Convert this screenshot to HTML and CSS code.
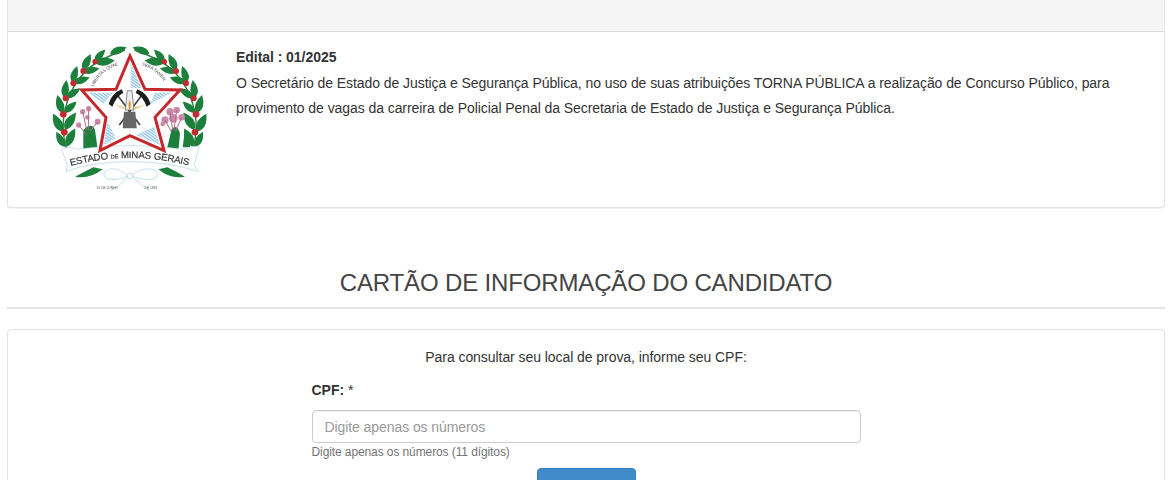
FILE: index.html
```html
<!DOCTYPE html>
<html lang="pt-BR">
<head>
<meta charset="utf-8">
<title>Cartão de Informação do Candidato</title>
<link rel="stylesheet" href="styles.css">
</head>
<body>
<main class="page">
  <section class="panel panel-edital">
    <div class="panel-heading"></div>
    <div class="media">
      <svg class="emblem" viewBox="0 0 600 525" role="img" aria-label="Brasão do Estado de Minas Gerais">
        <defs>
          <path id="leaf" d="M0 0Q35-46 100 0Q40 36 0 0Z"/>
          <pattern id="hatch" width="7" height="7" patternUnits="userSpaceOnUse" patternTransform="rotate(35)">
            <rect width="7" height="4" fill="#8fc3e6"/>
          </pattern>
          <g id="branch">
            <path d="M112 365C85 290 100 190 170 120C205 90 240 75 285 60" fill="none" stroke="#2e7a3a" stroke-width="4"/>
            <g fill="#1d7f3c">
              <use href="#leaf" transform="translate(240 72) rotate(-22) scale(.54)"/>
              <use href="#leaf" transform="translate(195 95) rotate(-50) scale(.48)"/>
              <use href="#leaf" transform="translate(195 100) rotate(-8) scale(.6)"/>
              <use href="#leaf" transform="translate(160 122) rotate(-66) scale(.55)"/>
              <use href="#leaf" transform="translate(160 128) rotate(-15) scale(.5)"/>
              <use href="#leaf" transform="translate(128 158) rotate(-75) scale(.52)"/>
              <use href="#leaf" transform="translate(130 160) rotate(-20) scale(.52)"/>
              <use href="#leaf" transform="translate(105 205) rotate(-85) scale(.55)"/>
              <use href="#leaf" transform="translate(108 205) rotate(-35) scale(.52)"/>
              <use href="#leaf" transform="translate(100 250) rotate(-108) scale(.58)"/>
              <use href="#leaf" transform="translate(104 250) rotate(-44) scale(.5)"/>
              <use href="#leaf" transform="translate(100 305) rotate(-120) scale(.62)"/>
              <use href="#leaf" transform="translate(105 300) rotate(-58) scale(.62)"/>
              <use href="#leaf" transform="translate(105 350) rotate(-120) scale(.52)"/>
              <use href="#leaf" transform="translate(110 350) rotate(-65) scale(.6)"/>
            </g>
            <g fill="#c52a30">
              <circle cx="195" cy="95" r="8"/><circle cx="160" cy="123" r="9"/><circle cx="130" cy="160" r="9"/>
              <circle cx="107" cy="205" r="9"/><circle cx="100" cy="253" r="10"/><circle cx="103" cy="307" r="10"/>
            </g>
          </g>
        </defs>
        <use href="#branch"/>
        <use href="#branch" transform="translate(598 0) scale(-1 1)"/>
        <g fill="#1d7f3c">
          <path d="M160 300Q185 275 195 300L205 372L160 365Z"/>
          <path d="M135 440Q180 448 218 418L190 412Q165 425 135 440Z"/>
          <path d="M465 440Q420 448 385 418L412 412Q440 425 465 440Z"/>
          <path d="M408 368L425 298Q440 280 450 310L445 365Z"/>
          <path d="M458 352L465 300Q482 325 480 352Z"/>
        </g>
        <g fill="#c98aa6">
          <circle cx="158" cy="245" r="8"/><circle cx="176" cy="236" r="8"/><circle cx="146" cy="285" r="8"/><circle cx="203" cy="275" r="9"/><circle cx="172" cy="262" r="7"/>
          <circle cx="420" cy="245" r="11"/><circle cx="440" cy="240" r="10"/><circle cx="405" cy="270" r="11"/><circle cx="430" cy="265" r="13"/><circle cx="455" cy="262" r="10"/><circle cx="398" cy="282" r="7"/>
        </g>
        <g stroke="#b5688c" stroke-width="3" fill="none">
          <path d="M158 245L170 300M176 236L175 300M146 285L170 315M203 275L180 305"/>
          <path d="M420 245L428 300M440 240L432 300M405 270L424 305M455 262L436 305"/>
        </g>
        <path d="M95 358Q118 346 140 358Q300 335 462 358Q485 346 508 350L492 405L505 425Q420 395 300 395Q180 395 108 425L112 405Z" fill="#fff" stroke="#a9d2e6" stroke-width="2"/>
        <path d="M300 78L345 178L450 180L375 262L402 362L300 317L210 362L228 262L155 180L258 178Z" fill="#fff" stroke="#c4282d" stroke-width="9" stroke-linejoin="miter"/>
        <g fill="url(#hatch)">
          <path d="M302 100L335 174L302 174Z"/>
          <path d="M178 188L248 188L220 222Z"/>
          <path d="M425 188L375 188L360 222Z"/>
          <path d="M232 275L222 345L258 325Z"/>
          <path d="M318 315L390 345L372 290Z"/>
        </g>
        <g stroke="#444" fill="none">
          <path d="M258 190L330 285" stroke-width="5"/>
          <path d="M340 190L268 285" stroke-width="5"/>
        </g>
        <g fill="#1d1d1d">
          <path d="M236 222Q245 190 275 178L280 188Q258 200 247 230Z"/>
          <path d="M362 222Q352 190 322 178L317 188Q340 200 350 230Z"/>
        </g>
        <path d="M255 222Q275 232 292 230L292 238Q272 240 255 222ZM345 222Q325 232 306 230L306 238Q326 240 345 222Z" fill="#e9d79a"/>
        <path d="M292 182H306L312 240H286Z" fill="#e9eef2" stroke="#555" stroke-width="2"/>
        <path d="M299 210Q306 225 299 240Q292 225 299 210Z" fill="#d9982b"/>
        <path d="M282 245H316L320 295H278Z" fill="#666"/>
        <path id="mottoL" d="M190 170Q215 120 262 106" fill="none"/>
        <path id="mottoR" d="M335 106Q385 120 412 170" fill="none"/>
        <path id="ribbonArc" d="M122 408Q300 360 480 408" fill="none"/>
        <text class="motto"><textPath href="#mottoL">LIBERTAS QUAE</textPath></text>
        <text class="motto"><textPath href="#mottoR">SERA TAMEN</textPath></text>
        <text class="ribbon"><textPath href="#ribbonArc" textLength="358">ESTADO <tspan class="ribbon-small">DE</tspan> MINAS GERAIS</textPath></text>
        <g fill="none" stroke="#bfe0ee" stroke-width="3">
          <path d="M295 438C260 405 220 415 222 435C225 455 265 450 295 438Z"/>
          <path d="M305 438C340 405 385 415 382 435C378 455 335 450 305 438Z"/>
          <path d="M290 442Q270 470 240 482M310 442Q335 470 360 482"/>
          <circle cx="300" cy="438" r="9"/>
        </g>
        <text class="date" x="232" y="477">15 DE JUNHO</text>
        <text class="date" x="363" y="477">DE 1891</text>
      </svg>
      <div class="media-body">
        <h2 class="edital-title">Edital : 01/2025</h2>
        <p class="edital-text">O Secretário de Estado de Justiça e Segurança Pública, no uso de suas atribuições TORNA PÚBLICA a realização de Concurso Público, para provimento de vagas da carreira de Policial Penal da Secretaria de Estado de Justiça e Segurança Pública.</p>
      </div>
    </div>
  </section>

  <h1 class="page-title">CARTÃO DE INFORMAÇÃO DO CANDIDATO</h1>

  <section class="panel panel-form">
    <p class="lead">Para consultar seu local de prova, informe seu CPF:</p>
    <form class="cpf-form">
      <label class="cpf-label" for="cpf"><b>CPF:</b> *</label>
      <input class="cpf-input" id="cpf" type="text" placeholder="Digite apenas os números">
      <small class="cpf-help">Digite apenas os números (11 dígitos)</small>
      <button class="cpf-submit" type="button" aria-label="Consultar"></button>
    </form>
  </section>
</main>
</body>
</html>
```

FILE: styles.css
```css
* { box-sizing: border-box; }

html, body {
  margin: 0;
  height: 480px;
  overflow: hidden;
  background: #fff;
}

body {
  font-family: "Liberation Sans", Arial, sans-serif;
  font-size: 14px;
  color: #333;
}

.page {
  padding: 0 5px 0 7px;
  height: 480px;
  overflow: hidden;
}

.panel {
  background: #fff;
  border: 1px solid #e3e3e3;
  border-radius: 4px;
  box-shadow: 0 1px 1px rgba(0, 0, 0, .05);
}

.panel-edital {
  border-top: 0;
  border-radius: 0 0 4px 4px;
  height: 208px;
}

.panel-heading {
  height: 32px;
  background: #f5f5f5;
  border-bottom: 1px solid #ddd;
}

.media {
  display: flex;
  align-items: flex-start;
}

.emblem {
  flex: none;
  display: block;
  width: 200px;
  height: 175px;
  margin-left: 22px;
  margin-top: -2px;
  filter: blur(.4px);
}

.motto {
  font: 13px "Liberation Sans", Arial, sans-serif;
  fill: #444;
}

.ribbon {
  font: 29px "Liberation Sans", Arial, sans-serif;
  fill: #333;
  stroke: #333;
  stroke-width: .5px;
}

.ribbon-small {
  font-size: 17px;
}

.date {
  font: 10px "Liberation Sans", Arial, sans-serif;
  fill: #555;
  text-anchor: middle;
}

.media-body {
  margin-left: 6px;
  padding-top: 15px;
  flex: 1;
  padding-right: 30px;
}

.edital-title {
  margin: 0;
  font-size: 14px;
  line-height: 20px;
  font-weight: 700;
  letter-spacing: -.05px;
}

.edital-text {
  margin: 4px 0 0;
  line-height: 25px;
  letter-spacing: -.07px;
}

.page-title {
  margin: 59px 0 20px;
  padding-bottom: 8px;
  border-bottom: 2px solid #e3e3e3;
  font-size: 24px;
  line-height: 32px;
  font-weight: 400;
  letter-spacing: -.15px;
  text-align: center;
  color: #444;
}

.panel-form {
  padding: 17px 0 0;
  height: 200px;
}

.lead {
  margin: 0;
  line-height: 20px;
  letter-spacing: -.06px;
  text-align: center;
}

.cpf-form {
  display: flex;
  flex-direction: column;
  width: 549px;
  margin: 13px auto 0;
}

.cpf-label {
  line-height: 20px;
  margin-bottom: 10px;
}

.cpf-input {
  height: 33px;
  padding: 6px 12px;
  border: 1px solid #ccc;
  border-radius: 4px;
  font: 14px "Liberation Sans", Arial, sans-serif;
  letter-spacing: -.08px;
  box-shadow: inset 0 1px 1px rgba(0, 0, 0, .075);
}

.cpf-input::placeholder {
  color: #999;
  opacity: 1;
}

.cpf-help {
  margin-top: 1px;
  font-size: 12px;
  line-height: 16px;
  letter-spacing: -.1px;
  color: #737373;
}

.cpf-submit {
  align-self: center;
  width: 99px;
  height: 34px;
  margin-top: 8px;
  background: #428bca;
  border: 1px solid #357ebd;
  border-radius: 4px;
}
```
